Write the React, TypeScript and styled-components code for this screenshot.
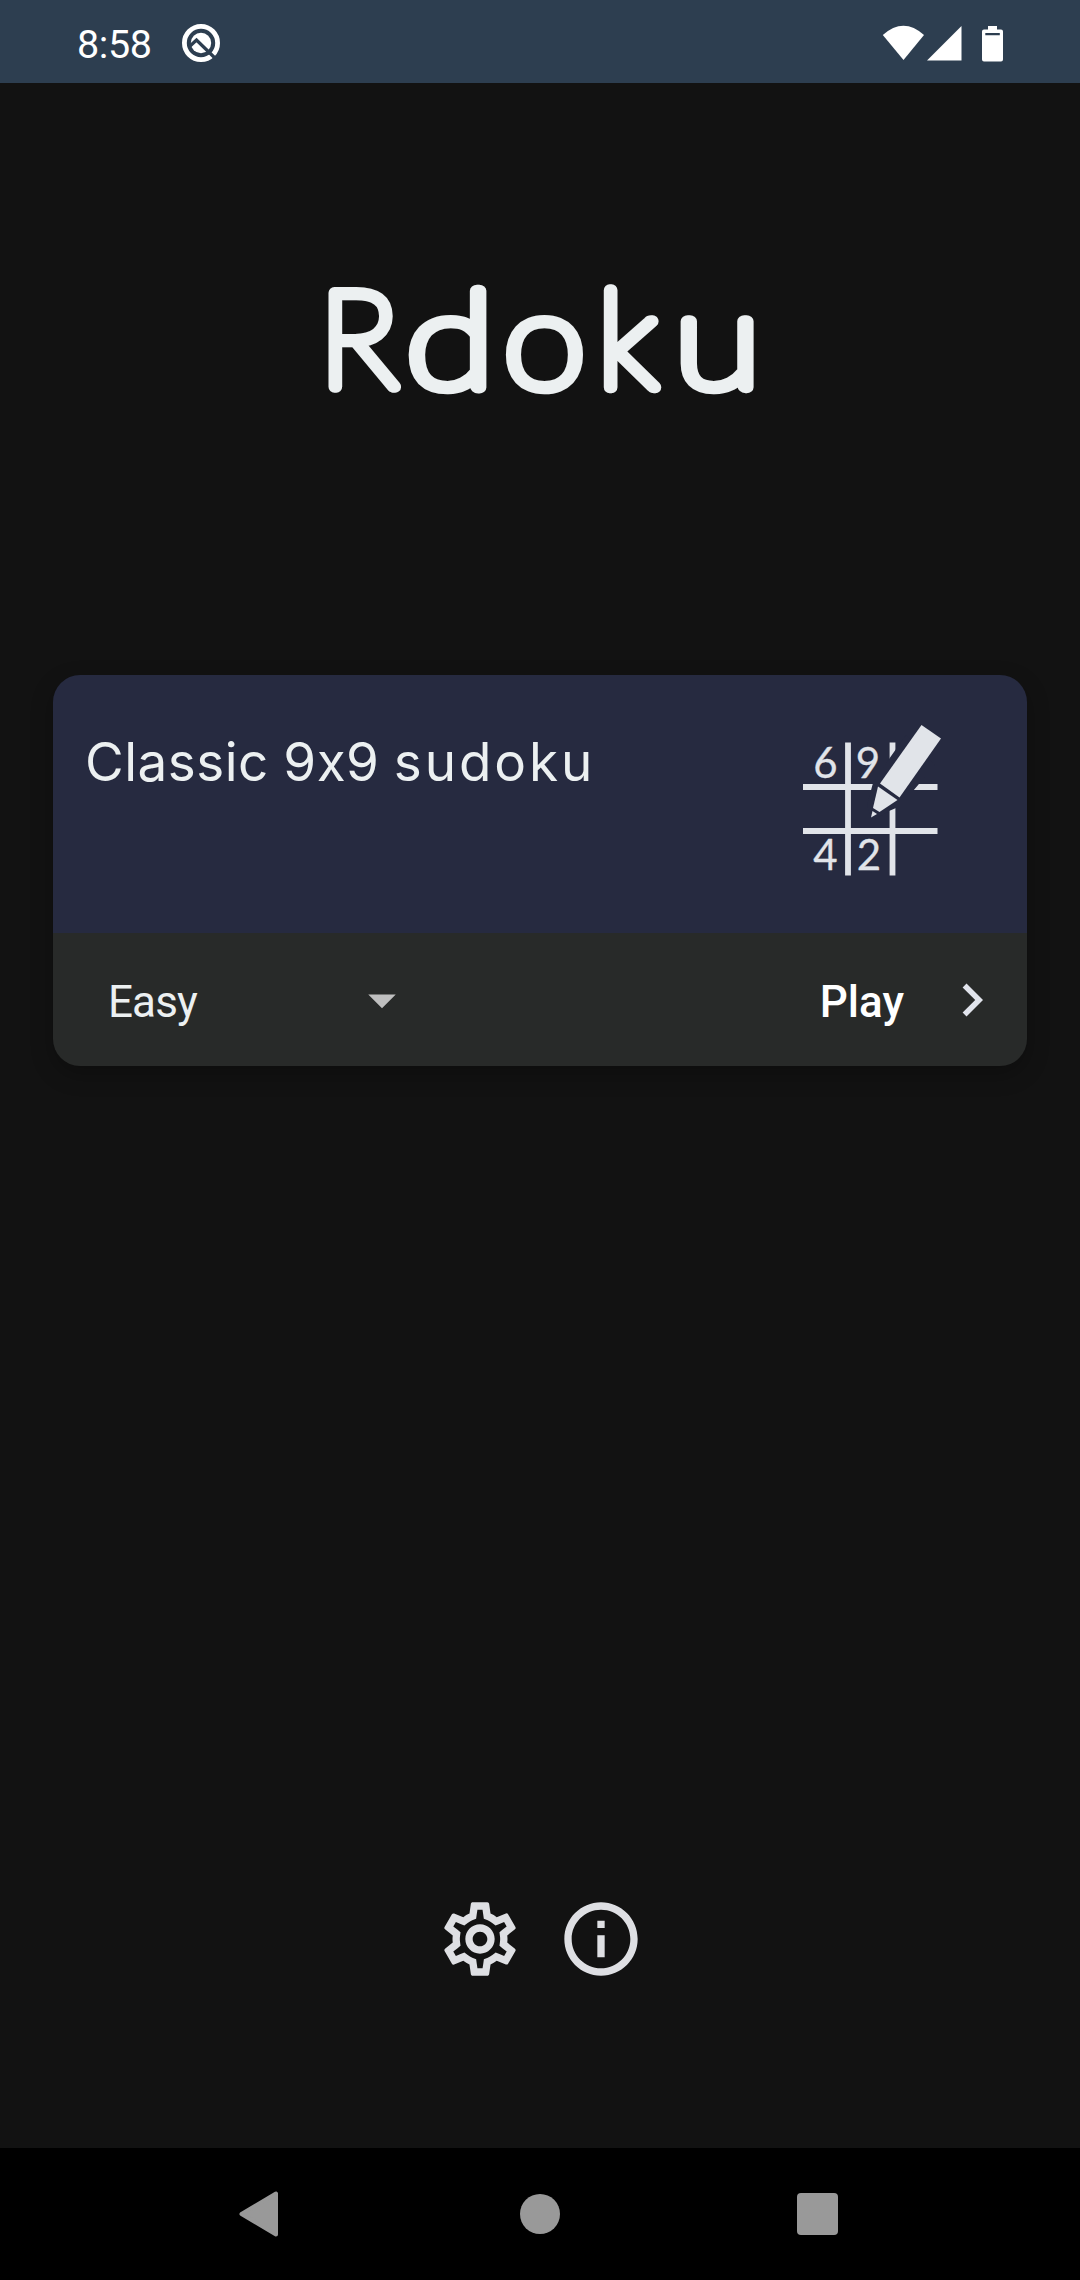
import React from "react";
import styled, { createGlobalStyle } from "styled-components";
import {
  MdArrowDropDown,
  MdChevronRight,
  MdOutlineInfo,
  MdOutlineSettings,
} from "react-icons/md";

const GlobalStyle = createGlobalStyle`
  *, *::before, *::after { box-sizing: border-box; }
  body { margin: 0; background: #121212; }
  button { border: 0; padding: 0; background: none; font: inherit; color: inherit; }
  svg { display: block; }
`;

const Screen = styled.div`
  display: flex;
  flex-direction: column;
  width: 1080px;
  height: 2280px;
  background: #121212;
  color: #ecf0f1;
  font-family: Roboto, "Noto Sans", sans-serif;
`;

const StatusBar = styled.header`
  display: flex;
  align-items: center;
  height: 83px;
  flex: none;
  padding: 3px 76px 0 77px;
  background: #2d3e50;
  color: #fff;
`;

const Clock = styled.time`
  width: 104px;
  padding-top: 3px;
  font-size: 39.5px;
  line-height: 48px;
  letter-spacing: -0.4px;
`;

const StatusIcons = styled.div`
  display: flex;
  align-items: center;
  margin-left: auto;
`;

const Main = styled.main`
  flex: 1;
  display: flex;
  flex-direction: column;
  align-items: center;
`;

const Title = styled.h1`
  margin: 0;
  padding-top: 132px;
  height: 592px;
`;

const TitleText = styled.text`
  font-family: Lato, "Open Sans", sans-serif;
  font-weight: 100;
  font-size: 134px;
  fill: #ecf0f1;
  stroke: #ecf0f1;
  stroke-width: 12px;
  stroke-linejoin: round;
  stroke-linecap: round;
`;

const Card = styled.section`
  width: 974px;
  height: 391px;
  border-radius: 27px;
  overflow: hidden;
  box-shadow: 0 8px 22px rgba(0, 0, 0, 0.25);
`;

const CardHeader = styled.div`
  display: flex;
  justify-content: space-between;
  height: 258px;
  padding: 50px 86px 0 32px;
  background: #262a40;
`;

const GameName = styled.h2`
  margin: 7px 0 0;
  font-family: Inter, "Open Sans", sans-serif;
  font-size: 53px;
  line-height: 60px;
  font-weight: 430;
  letter-spacing: 0.5px;
  word-spacing: -1px;
  white-space: nowrap;
`;

const WideWord = styled.span`
  letter-spacing: 2.9px;
`;

const Digit = styled.text`
  font-family: Lato, sans-serif;
  font-size: 42px;
  fill: #e1e4e9;
  stroke: #e1e4e9;
  stroke-width: 0.3px;
  stroke-linejoin: round;
  text-anchor: middle;
`;

const CardFooter = styled.div`
  display: flex;
  align-items: center;
  justify-content: space-between;
  height: 133px;
  padding: 0 22px 0 55px;
  background: #282a29;
  font-size: 44px;
  line-height: 60px;
`;

const Label = styled.span<{ $tracking?: string }>`
  padding-top: 4px;
  letter-spacing: ${(p) => p.$tracking ?? "0"};
`;

const Select = styled.button`
  display: flex;
  align-items: center;
  justify-content: space-between;
  width: 307px;
  svg { color: #bfbfbf; }
`;

const PlayButton = styled.button`
  display: flex;
  align-items: center;
  gap: 35px;
  color: #fff;
  font-weight: 500;
  svg { color: #e1e4ec; }
`;

const Actions = styled.div`
  display: flex;
  gap: 33px;
  margin-top: 829px;
  color: #dedfe3;
`;

const NavBar = styled.nav`
  display: grid;
  grid-template-columns: 281px 1fr 41px;
  width: 599px;
  height: 132px;
  align-items: center;
`;

const NavArea = styled.footer`
  flex: none;
  display: flex;
  justify-content: center;
  padding-right: 3px;
  background: #000;
`;

function AndroidQ() {
  return (
    <svg width="40" height="40" viewBox="0 0 40 40">
      <circle cx="20" cy="20" r="16.6" fill="none" stroke="#fff" strokeWidth="4.8" />
      <circle cx="20" cy="20" r="10.2" fill="#fff" />
      <path d="M8.500 23.500L15.500 17L36 37" fill="none" stroke="#2d3e50" strokeWidth="3.300" />
    </svg>
  );
}

function SystemIcons() {
  return (
    <svg width="122" height="38" viewBox="0 0 122 38">
      <path d="M0.8 11Q21.500 -7.500 42 11L21.500 36Z" fill="#fff" />
      <path d="M79.500 2V36.500H45Z" fill="#fff" />
      <path
        fillRule="evenodd"
        fill="#fff"
        d="M106 2H115V5.500H119Q121 5.500 121 7.500V35.500Q121 37.500 119 37.500H102Q100 37.500 100 35.500V7.500Q100 5.500 102 5.500H106ZM103.300 9V11.300H117.800V9Z"
      />
    </svg>
  );
}

function SudokuIcon() {
  return (
    <svg width="138" height="162" viewBox="0 0 138 162">
      <path
        d="M45 17.500V150.500M89.500 17.500V150.500M0 62H134.500M0 106H134.500"
        fill="none"
        stroke="#e1e4e9"
        strokeWidth="5.800"
      />
      <path d="M103 10L86 34L70 58L64 80L69 96L86 86L93 83L110 66L132 40Z" fill="#262a40" />
      <path d="M118.500 0L138 13.500L96.500 72.500L77 58.500Z" fill="#e1e4e9" />
      <path d="M75 61.500L94.500 75L76.500 87L70 83Z" fill="#e1e4e9" />
      <path d="M69.500 86L74 89L68 92.500Z" fill="#e1e4e9" />
      <Digit x="22.500" y="52.500">6</Digit>
      <Digit x="65" y="52.500">9</Digit>
      <Digit x="22.500" y="145">4</Digit>
      <Digit x="66" y="145">2</Digit>
    </svg>
  );
}

export default function App() {
  return (
    <Screen>
      <GlobalStyle />
      <StatusBar>
        <Clock>8:58</Clock>
        <AndroidQ />
        <StatusIcons>
          <SystemIcons />
        </StatusIcons>
      </StatusBar>
      <Main>
        <Title>
          <svg width="480" height="240" viewBox="0 0 480 240">
            <TitleText y="171.500">
              <tspan x="19">R</tspan>
              <tspan x="106" textLength="88" lengthAdjust="spacingAndGlyphs">d</tspan>
              <tspan x="203.500" textLength="82" lengthAdjust="spacingAndGlyphs">o</tspan>
              <tspan x="297.500">k</tspan>
              <tspan x="374" textLength="87" lengthAdjust="spacingAndGlyphs">u</tspan>
            </TitleText>
          </svg>
        </Title>
        <Card>
          <CardHeader>
            <GameName>
              Classic 9x9 <WideWord>sudoku</WideWord>
            </GameName>
            <SudokuIcon />
          </CardHeader>
          <CardFooter>
            <Select>
              <Label $tracking="-0.9px">Easy</Label>
              <MdArrowDropDown size={66} />
            </Select>
            <PlayButton>
              <Label>Play</Label>
              <MdChevronRight size={66} />
            </PlayButton>
          </CardFooter>
        </Card>
        <Actions>
          <MdOutlineSettings size={88} />
          <MdOutlineInfo size={88} />
        </Actions>
      </Main>
      <NavArea>
        <NavBar>
          <svg width="40" height="46" viewBox="0 0 40 46">
            <path d="M2.500 23L37 2.500V43.500Z" fill="#999" stroke="#999" strokeWidth="4" strokeLinejoin="round" />
          </svg>
          <svg width="40" height="40" viewBox="0 0 40 40">
            <circle cx="20" cy="20" r="20" fill="#999" />
          </svg>
          <svg width="41" height="42" viewBox="0 0 41 42">
            <rect width="41" height="42" rx="4" fill="#999" />
          </svg>
        </NavBar>
      </NavArea>
    </Screen>
  );
}
